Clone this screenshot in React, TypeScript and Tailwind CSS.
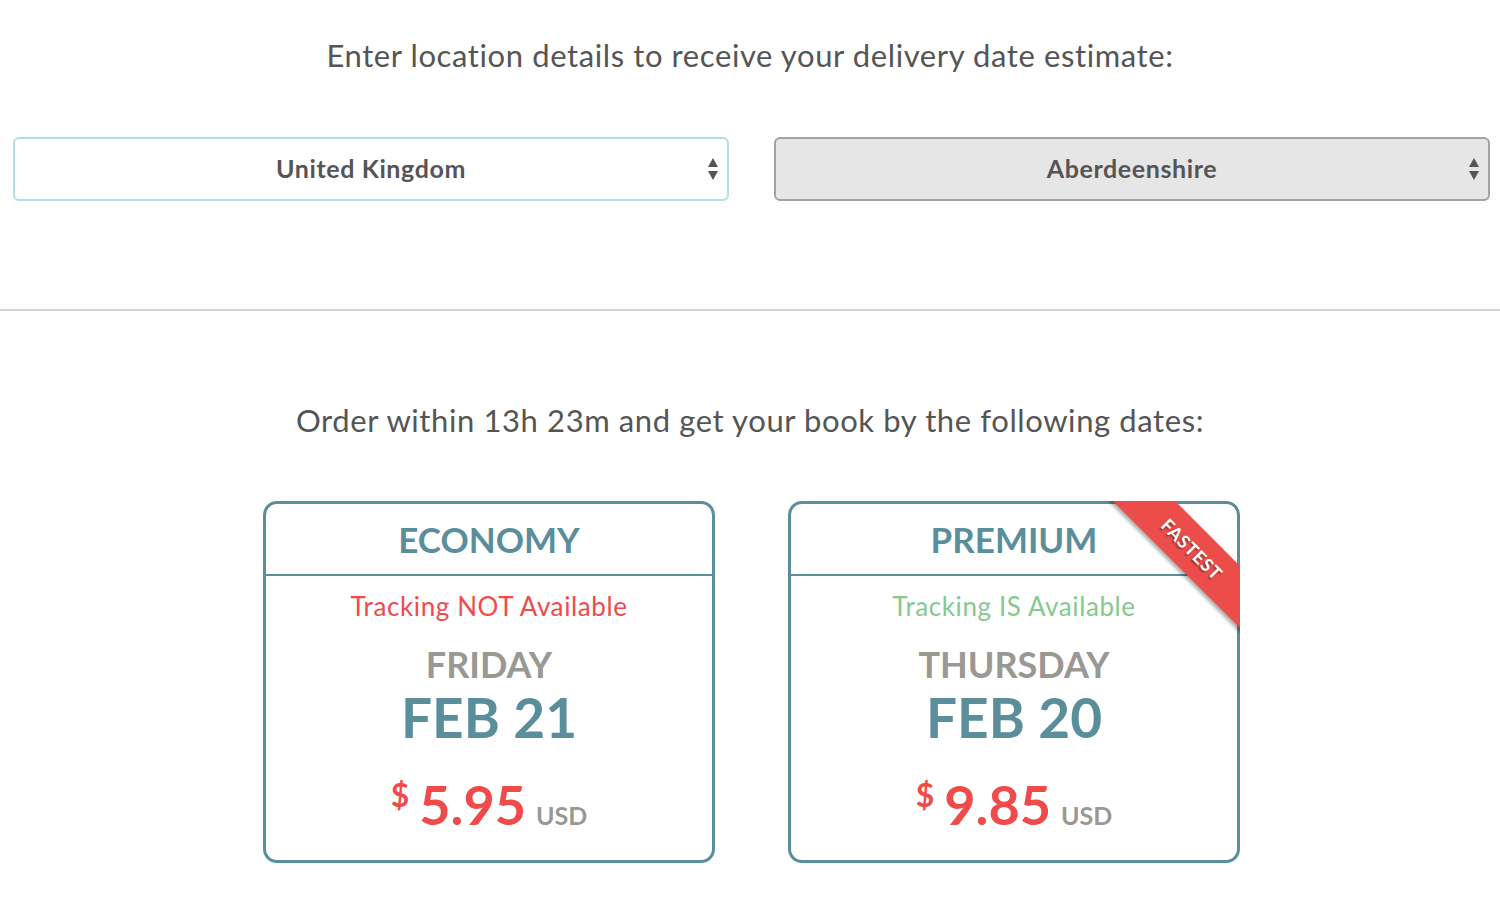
import { ReactNode } from 'react';

const font = { fontFamily: '"Lato", "Open Sans", sans-serif' };

function SelectBox({ label, muted }: { label: string; muted?: boolean }) {
  return (
    <div
      className={
        'relative flex h-[64px] flex-1 items-center justify-center rounded-[6px] border-2 ' +
        (muted ? 'border-[#a3a3a0] bg-[#e6e6e6]' : 'border-[#b5dde6] bg-white')
      }
    >
      <span className="text-[25px] font-bold tracking-[0.6px] text-[#555555]">{label}</span>
      <svg className="absolute right-[8px] top-1/2 -translate-y-1/2" width="12" height="24" viewBox="0 0 12 24">
        <path d="M6 1 L11 10 L1 10 Z" fill="#555555" />
        <path d="M1 14 L11 14 L6 23 Z" fill="#555555" />
      </svg>
    </div>
  );
}

function Card({
  title,
  tracking,
  trackingOk,
  day,
  date,
  price,
  ribbon,
}: {
  title: string;
  tracking: string;
  trackingOk: boolean;
  day: string;
  date: string;
  price: string;
  ribbon?: ReactNode;
}) {
  return (
    <div className="relative flex h-[362px] w-[452px] flex-col rounded-[14px] border-[3px] border-[#5b8e9b] bg-white">
      {ribbon}
      <div className="flex h-[72px] items-center justify-center border-b-2 border-[#5b8e9b]">
        <span className="text-[35px] font-bold text-[#5b8e9b]">{title}</span>
      </div>
      <div className="flex flex-col items-center">
        <div
          className={
            'mt-[14px] text-[26px] leading-[32px] tracking-[0.6px] ' +
            (trackingOk ? 'text-[#86c98e]' : 'text-[#ef4b4b]')
          }
        >
          {tracking}
        </div>
        <div className="mt-[21px] text-[36px] font-bold leading-[42px] text-[#9a9893]">{day}</div>
        <div className="text-[55px] font-bold leading-[64px] text-[#5b8e9b]">{date}</div>
        <div className="mt-[24px] flex items-baseline">
          <span className="relative -top-[18px] mr-[10px] text-[32px] font-bold text-[#ef4b4b]">$</span>
          <span className="text-[54px] font-bold leading-[64px] text-[#ef4b4b]">{price}</span>
          <span className="ml-[10px] text-[25px] font-bold text-[#9a9893]">USD</span>
        </div>
      </div>
    </div>
  );
}

function Ribbon() {
  return (
    <div className="absolute -right-[3px] -top-[3px] h-[132px] w-[132px] overflow-hidden rounded-tr-[14px]">
      <div className="absolute left-[-16px] top-[26px] flex h-[44px] w-[200px] rotate-45 items-center justify-center bg-[#ec4d4a] shadow-[0_3px_4px_rgba(0,0,0,0.35)]">
        <span className="text-[18px] font-bold tracking-[0.6px] text-white [text-shadow:0_2px_2px_rgba(0,0,0,0.4)]">
          FASTEST
        </span>
      </div>
    </div>
  );
}

export default function App() {
  return (
    <div className="min-h-screen bg-white" style={font}>
      <div className="pt-[37px] text-center text-[31px] leading-[36px] tracking-[0.6px] text-[#555555]">
        Enter location details to receive your delivery date estimate:
      </div>
      <div className="mt-[64px] flex gap-[45px] pl-[13px] pr-[10px]">
        <SelectBox label="United Kingdom" />
        <SelectBox label="Aberdeenshire" muted />
      </div>
      <div className="mt-[108px] h-[2px] bg-[#d4d4d4]" />
      <div className="mt-[91px] text-center text-[31px] leading-[36px] tracking-[0.6px] text-[#555555]">
        Order within 13h 23m and get your book by the following dates:
      </div>
      <div className="mt-[63px] flex justify-center gap-[73px] pl-[3px]">
        <Card
          title="ECONOMY"
          tracking="Tracking NOT Available"
          trackingOk={false}
          day="FRIDAY"
          date="FEB 21"
          price="5.95"
        />
        <Card
          title="PREMIUM"
          tracking="Tracking IS Available"
          trackingOk
          day="THURSDAY"
          date="FEB 20"
          price="9.85"
          ribbon={<Ribbon />}
        />
      </div>
    </div>
  );
}
